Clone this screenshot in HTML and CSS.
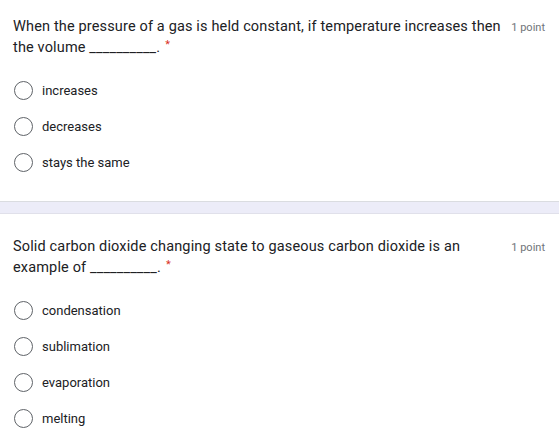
FILE: index.html
```html
<!DOCTYPE html>
<html>
<head>
<meta charset="utf-8">
<link rel="stylesheet" href="styles.css">
</head>
<body>
<div class="card first">
  <div class="head">
    <div class="question">When the pressure of a gas is held constant, if temperature increases then the volume __________.<span class="req">*</span></div>
    <div class="points">1 point</div>
  </div>
  <div class="options">
    <label class="option"><span class="radio"></span><span class="label">increases</span></label>
    <label class="option"><span class="radio"></span><span class="label">decreases</span></label>
    <label class="option"><span class="radio"></span><span class="label">stays the same</span></label>
  </div>
</div>
<div class="band"></div>
<div class="card second">
  <div class="head">
    <div class="question">Solid carbon dioxide changing state to gaseous carbon dioxide is an example of __________.<span class="req">*</span></div>
    <div class="points">1 point</div>
  </div>
  <div class="options">
    <label class="option"><span class="radio"></span><span class="label">condensation</span></label>
    <label class="option"><span class="radio"></span><span class="label">sublimation</span></label>
    <label class="option"><span class="radio"></span><span class="label">evaporation</span></label>
    <label class="option"><span class="radio"></span><span class="label">melting</span></label>
  </div>
</div>
</body>
</html>
```

FILE: styles.css
```css
html, body {
  margin: 0;
  padding: 0;
  background: #ffffff;
  font-family: Roboto, "Liberation Sans", sans-serif;
  color: #202124;
}
.card {
  background: #ffffff;
  padding: 16px 14px 21px 13px;
}
.card.second {
  padding-top: 22px;
}
.head {
  display: flex;
  align-items: baseline;
}
.question {
  flex: 1;
  font-size: 14.5px;
  line-height: 21px;
  letter-spacing: 0.15px;
}
.req {
  color: #d93025;
  font-size: 11px;
  line-height: 1;
  vertical-align: 4px;
  margin-left: 5px;
}
.points {
  margin-left: 10px;
  font-size: 11px;
  color: #70757a;
  white-space: nowrap;
}
.options {
  margin-top: 14px;
  display: flex;
  flex-direction: column;
}
.option {
  display: flex;
  align-items: center;
  height: 36px;
}
.radio {
  box-sizing: border-box;
  width: 19px;
  height: 19px;
  border: 1.5px solid #5f6368;
  border-radius: 50%;
  margin-left: 1px;
}
.label {
  margin-left: 9px;
  font-size: 13px;
}
.band {
  height: 11px;
  background: #ececf8;
  border-top: 1px solid #dadce0;
  border-bottom: 1px solid #e0e0ea;
}
```
